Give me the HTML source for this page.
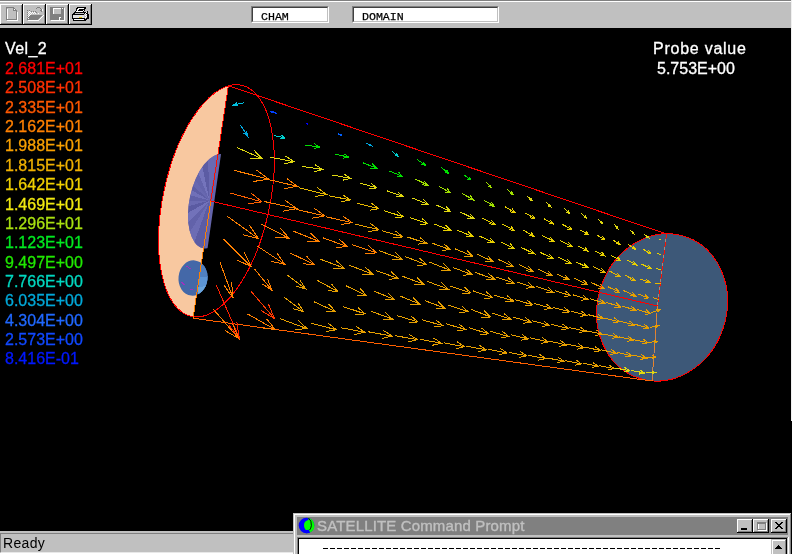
<!DOCTYPE html>
<html><head><meta charset="utf-8"><title>VR Viewer</title>
<style>
html,body{margin:0;padding:0;background:#000;}
body{width:792px;height:554px;position:relative;overflow:hidden;font-family:"Liberation Sans",sans-serif;}
.abs{position:absolute;}
.lg,.inp span,.abs{-webkit-font-smoothing:antialiased;}
.lg,#ttl,#rdy,.inp span{will-change:transform;}
#tb{left:0;top:0;width:792px;height:28px;background:#c0c0c0;}
#tb .l0{left:0;top:0;width:792px;height:1px;background:#808080;}
#tb .l1{left:0;top:1px;width:792px;height:1px;background:#fff;}
.btn{position:absolute;top:4px;width:22px;height:21px;background:#c0c0c0;box-sizing:border-box;
 border-top:1px solid #fff;border-left:1px solid #fff;border-right:1px solid #404040;border-bottom:1px solid #404040;}
.btn:after{content:"";position:absolute;left:0;top:0;right:0;bottom:0;border-right:1px solid #808080;border-bottom:1px solid #808080;}
.inp{position:absolute;top:6px;height:17px;background:#fff;box-sizing:border-box;border-top:1px solid #808080;border-left:1px solid #808080;border-right:1px solid #fff;border-bottom:1px solid #fff;}
.inp:after{content:"";position:absolute;left:0;top:0;right:0;bottom:0;border-top:1px solid #404040;border-left:1px solid #404040;border-right:1px solid #c0c0c0;border-bottom:1px solid #c0c0c0;}
.inp span{position:absolute;left:9.3px;top:3.2px;font-family:"Liberation Mono",monospace;font-size:11.6px;line-height:13px;color:#000;-webkit-text-stroke:0.25px #000;}
.lg{position:absolute;left:4.5px;font-size:16px;line-height:18px;white-space:nowrap;-webkit-text-stroke:0.3px currentColor;}
.w{color:#fff;}
#sb{left:0;top:531px;width:294px;height:23px;background:#c0c0c0;}
#sat{left:293px;top:513px;width:498px;height:41px;background:#c0c0c0;}
</style></head><body>
<div class="abs" style="left:791px;top:0;width:1px;height:421px;background:#f0f0f0;z-index:5"></div>
<div id="tb" class="abs"><div class="abs l0"></div><div class="abs l1"></div>
<svg class="abs" style="left:0;top:0" width="94" height="28" viewBox="0 0 94 28" shape-rendering="crispEdges" fill="none" stroke-width="1">
<g id="bt">
<rect x="0" y="4" width="22" height="21" fill="#c0c0c0"/>
<path d="M0.5 24V4.5H22" stroke="#fff"/>
<path d="M1 23.5H21.5V5" stroke="#808080"/>
<path d="M0 24.5H22.5V4" stroke="#000"/>
</g>
<use href="#bt" x="23"/><use href="#bt" x="46"/><use href="#bt" x="69"/>
<!-- new -->
<path d="M7.5 8.5V20.5H17.5V11.5" stroke="#fff"/>
<path d="M6.5 7.5H13.5L16.5 10.5V19.5H6.5Z M13.5 7.5V10.5H16.5" stroke="#808080"/>
<rect x="14" y="9" width="1" height="1" fill="#fff"/>
<!-- open -->
<path d="M28 20.5H38.5L43.5 15.5" stroke="#fff"/>
<polygon points="30.5,15 42.5,15 37.5,20 27,20 27,18" fill="#808080"/>
<path d="M27.5 19V10.5H30.5L31.5 11.5H36.5V14" stroke="#808080" stroke-dasharray="1 1"/>
<g fill="#fff"><rect x="28" y="12" width="1" height="1"/><rect x="29" y="13" width="1" height="1"/><rect x="28" y="14" width="1" height="1"/><rect x="29" y="11" width="1" height="1"/><rect x="30" y="12" width="1" height="1"/><rect x="31" y="13" width="1" height="1"/><rect x="28" y="16" width="1" height="1"/><rect x="29" y="15" width="1" height="1"/><rect x="30" y="14" width="1" height="1"/><rect x="28" y="18" width="1" height="1"/><rect x="32" y="12" width="1" height="1"/><rect x="34" y="12" width="1" height="1"/><rect x="33" y="13" width="1" height="1"/><rect x="35" y="13" width="1" height="1"/></g>
<path d="M35.5 9.5L37.5 7.5H39.5L41.5 9.5V11.5M39.5 10.5H42.5" stroke="#808080"/>
<path d="M38.5 12.5V13.5M42.5 9V11" stroke="#fff"/>
<!-- save -->
<path d="M51 20.5H64.5V8" stroke="#fff"/>
<rect x="50" y="7" width="14" height="13" fill="#808080"/>
<rect x="53" y="8" width="8" height="6" fill="#fff"/>
<rect x="54" y="9" width="7" height="5" fill="#c0c0c0"/>
<rect x="59" y="17" width="2" height="3" fill="#fff"/><rect x="60" y="18" width="1" height="2" fill="#808080"/>
<rect x="62" y="8" width="1" height="1" fill="#fff"/>
<!-- print -->
<polygon points="77.5,7.5 85.5,7.5 83.5,12 75.5,12" fill="#fff" stroke="#000"/>
<path d="M78.5 9.5H83.5M77.5 10.5H82.5" stroke="#000"/>
<polygon points="75,12.5 86,12.5 88,14.5 88,18.5 85,20.5 74,20.5 72.5,18.5 72.5,15" fill="#c0c0c0" stroke="#000"/>
<rect x="73" y="15" width="11" height="3" fill="#e0e0e0"/>
<path d="M72.5 14.5H84M72.5 18.5H84.5M74 20.5H84" stroke="#000"/>
<path d="M74 19.5H84" stroke="#fff"/>
<path d="M84.5 14L87.5 11.5V17.5L84.5 20" stroke="#000"/>
<g fill="#fff"><rect x="85" y="13" width="1" height="1"/><rect x="86" y="14" width="1" height="1"/><rect x="85" y="15" width="1" height="1"/><rect x="86" y="16" width="1" height="1"/><rect x="85" y="17" width="1" height="1"/><rect x="86" y="12" width="1" height="1"/></g>
<rect x="79" y="17" width="3" height="1" fill="#e0c000"/>
</svg>
<div class="inp" style="left:251px;width:78px"><span>CHAM</span></div>
<div class="inp" style="left:352px;width:147px"><span>DOMAIN</span></div>
</div>

<svg class="abs" style="left:0;top:28px" width="792" height="503" viewBox="0 28 792 503" shape-rendering="crispEdges" fill="none" stroke-width="1">
<defs>
<clipPath id="lefthalf"><polygon points="228.4,85.7 193,318.2 100,330 100,60"/></clipPath>
<clipPath id="inl"><ellipse cx="216.4" cy="200.8" rx="53.3" ry="118.3" transform="rotate(12.23 216.4 200.8)"/></clipPath>
<clipPath id="violethalf"><polygon points="221.6,150 206.6,255 150,255 150,150"/></clipPath>
<clipPath id="violetclip"><ellipse cx="213.1" cy="201.2" rx="23.5" ry="48" transform="rotate(12.23 213.1 201.2)"/></clipPath>
<clipPath id="smallc"><ellipse cx="193" cy="278" rx="14.5" ry="17.7" transform="rotate(6 193 278)"/></clipPath>
</defs>
<!-- inlet disc left half -->
<g clip-path="url(#lefthalf)">
<ellipse cx="216.4" cy="200.8" rx="53.3" ry="118.3" transform="rotate(12.23 216.4 200.8)" fill="#f8c8a0"/>
</g>
<g clip-path="url(#violetclip)">
<g clip-path="url(#violethalf)">
<rect x="180" y="150" width="50" height="105" fill="#6464aa"/>
<polygon points="209.5,200.5 203.4,270.2 185.6,266.3" fill="#5c5ca4"/>
<polygon points="209.5,200.5 185.6,266.3 172.4,259.9" fill="#6c6cb4"/>
<polygon points="209.5,200.5 172.4,259.9 160.0,250.0" fill="#6262aa"/>
<polygon points="209.5,200.5 160.0,250.0 148.9,235.5" fill="#7272ba"/>
<polygon points="209.5,200.5 148.9,235.5 141.9,218.6" fill="#5a5aa2"/>
<polygon points="209.5,200.5 141.9,218.6 139.5,200.5" fill="#6a6ab2"/>
<polygon points="209.5,200.5 139.5,200.5 141.9,182.4" fill="#6060a8"/>
<polygon points="209.5,200.5 141.9,182.4 148.9,165.5" fill="#7070b8"/>
<polygon points="209.5,200.5 148.9,165.5 157.5,153.7" fill="#5e5ea6"/>
<polygon points="209.5,200.5 157.5,153.7 169.3,143.2" fill="#6868b0"/>
<polygon points="209.5,200.5 169.3,143.2 183.3,135.6" fill="#6464ac"/>
<polygon points="209.5,200.5 183.3,135.6 194.9,132.0" fill="#7474bc"/>
<polygon points="209.5,200.5 194.9,132.0 207.1,130.5" fill="#5c5ca4"/>
<polygon points="209.5,200.5 207.1,130.5 221.7,131.6" fill="#6a6ab2"/>
</g></g>
<g clip-path="url(#smallc)">
<rect x="175" y="255" width="40" height="45" fill="#4468a8"/>
<polygon points="202.5,255 197.3,300 215,300 215,255" fill="#5080c0"/>
<polygon points="199.5,277 198.5,288 215,286 215,276" fill="#5c94d4"/>
<polygon points="198.5,287 197.5,300 215,300 215,285" fill="#6aa4dc"/>
<path d="M181 282l4 3M186 266l5 3M190 289l3 1" stroke="#a030c0"/>
</g>
<!-- outlet -->
<ellipse cx="662.1" cy="307.4" rx="64.5" ry="74.5" transform="rotate(17.35 662.1 307.4)" fill="#3d5878" stroke="#ff0000"/>
<!-- inlet outline -->
<ellipse cx="216.4" cy="200.8" rx="53.3" ry="118.3" transform="rotate(12.23 216.4 200.8)" stroke="#ff0000"/>
<!-- edges -->
<line x1="228.4" y1="85.7" x2="666.5" y2="234" stroke="#ff0000"/>
<line x1="193" y1="318.2" x2="652" y2="381" stroke="#ff6000"/>
<line x1="210.5" y1="201" x2="657.5" y2="306" stroke="#ff0000"/>
<line x1="228.4" y1="85.7" x2="210.7" y2="201.5" stroke="#ff1000"/><line x1="210.7" y1="201.5" x2="193" y2="318.2" stroke="#ff8000"/>
<line x1="666.5" y1="234" x2="657.5" y2="306" stroke="#a08a80"/><line x1="666.5" y1="234" x2="657.5" y2="306" stroke="#ff1000" stroke-dasharray="5 3"/><line x1="657.5" y1="306" x2="652" y2="381" stroke="#c08858"/><line x1="657.5" y1="306" x2="652" y2="381" stroke="#f08020" stroke-dasharray="4 4"/>
<g>
<path d="M243.9 102.7L233.3 105.2M238.0 105.7L233.3 105.2L237.2 102.6" stroke="#00c0e0"/>
<path d="M240.5 125.1L247.9 136.5M246.5 130.9L247.9 136.5L243.4 132.9" stroke="#00a8e0"/>
<path d="M237.2 147.7L262.0 158.6M253.9 150.1L262.0 158.6L250.3 158.4" stroke="#e0d810"/>
<path d="M233.8 170.3L268.7 179.1M256.3 169.8L268.7 179.1L253.4 181.5" stroke="#ff8000"/>
<path d="M230.3 193.1L262.2 201.9M251.1 193.1L262.2 201.9L248.1 203.8" stroke="#ff6000"/>
<path d="M226.9 216.0L258.2 238.5M249.5 225.1L258.2 238.5L242.7 234.6" stroke="#ff8000"/>
<path d="M223.4 239.1L251.1 266.6M244.2 252.2L251.1 266.6L236.7 259.8" stroke="#ff8000"/>
<path d="M220.0 262.2L233.1 298.3M231.5 282.4L233.1 298.3L224.0 285.1" stroke="#ff8000"/>
<path d="M216.5 285.5L239.3 338.1M236.9 322.3L239.3 338.1L229.3 325.6" stroke="#ff2000"/>
<path d="M213.0 308.9L238.9 338.7M232.6 324.0L238.9 338.7L225.1 330.5" stroke="#ff8000"/>
<path d="M276.9 113.5L270.7 111.2M272.8 113.2L270.7 111.2L273.6 111.1" stroke="#0040ff"/>
<path d="M273.7 135.4L285.2 138.0M281.1 135.0L285.2 138.0L280.3 138.8" stroke="#00d0d0"/>
<path d="M270.5 157.3L293.9 161.7M285.4 156.0L293.9 161.7L283.9 163.9" stroke="#e0d810"/>
<path d="M267.3 179.3L297.4 186.3M286.7 178.5L297.4 186.3L284.3 188.6" stroke="#ff8000"/>
<path d="M264.1 201.5L296.8 208.6M285.0 200.3L296.8 208.6L282.6 211.3" stroke="#ff8000"/>
<path d="M260.8 223.8L289.1 238.3M280.2 227.9L289.1 238.3L275.5 237.1" stroke="#ff8000"/>
<path d="M257.6 246.2L284.9 264.4M276.8 252.8L284.9 264.4L271.1 261.3" stroke="#ff8000"/>
<path d="M254.3 268.7L271.9 290.2M267.6 279.0L271.9 290.2L261.8 283.7" stroke="#ff8000"/>
<path d="M251.0 291.3L274.4 318.5M268.5 304.2L274.4 318.5L261.1 310.5" stroke="#ff3800"/>
<path d="M247.6 314.0L275.3 329.6M266.7 319.0L275.3 329.6L261.8 327.8" stroke="#ff8000"/>
<path d="M308.1 123.8L306.6 123.8M307.7 124.2L306.6 123.8L307.7 123.3" stroke="#0000ff"/>
<path d="M305.1 145.0L319.8 147.1M314.3 143.8L319.8 147.1L313.6 148.7" stroke="#00e000"/>
<path d="M302.1 166.4L322.8 169.5M315.1 164.8L322.8 169.5L314.0 171.7" stroke="#e0d810"/>
<path d="M299.0 187.8L326.8 194.6M316.9 187.3L326.8 194.6L314.7 196.6" stroke="#e8b800"/>
<path d="M295.9 209.4L324.8 215.9M314.5 208.4L324.8 215.9L312.3 218.2" stroke="#ff8000"/>
<path d="M292.9 231.0L319.4 241.6M310.6 233.0L319.4 241.6L307.1 241.8" stroke="#ff8000"/>
<path d="M289.8 252.8L314.1 264.5M306.3 255.9L314.1 264.5L302.5 263.8" stroke="#ff8000"/>
<path d="M286.7 274.7L305.6 288.9M300.1 280.3L305.6 288.9L295.8 286.1" stroke="#e8a000"/>
<path d="M283.5 296.7L303.6 311.7M297.8 302.6L303.6 311.7L293.3 308.7" stroke="#e8a000"/>
<path d="M280.4 318.8L307.3 328.8M298.2 320.4L307.3 328.8L294.9 329.3" stroke="#e8a000"/>
<path d="M337.6 133.5L342.1 135.8M340.7 134.1L342.1 135.8L340.0 135.6" stroke="#0060ff"/>
<path d="M334.8 154.2L348.8 157.1M343.7 153.6L348.8 157.1L342.7 158.2" stroke="#00e000"/>
<path d="M331.9 174.9L350.8 178.4M343.9 173.9L350.8 178.4L342.7 180.2" stroke="#e0d810"/>
<path d="M329.0 195.8L350.4 199.9M342.6 194.7L350.4 199.9L341.2 201.9" stroke="#e8b800"/>
<path d="M326.1 216.8L352.0 222.6M342.7 216.0L352.0 222.6L340.7 224.7" stroke="#ff8000"/>
<path d="M323.2 237.9L347.6 246.7M339.3 239.2L347.6 246.7L336.4 247.3" stroke="#ff8000"/>
<path d="M320.2 259.1L344.2 268.2M336.2 260.6L344.2 268.2L333.2 268.6" stroke="#e8a000"/>
<path d="M317.3 280.4L337.8 291.6M331.4 283.9L337.8 291.6L327.8 290.5" stroke="#e8a000"/>
<path d="M314.3 301.9L335.7 311.6M328.8 304.2L335.7 311.6L325.6 311.2" stroke="#e8a000"/>
<path d="M311.3 323.4L336.7 329.8M327.7 323.0L336.7 329.8L325.6 331.5" stroke="#e8a000"/>
<path d="M365.6 142.6L371.4 145.9M369.6 143.7L371.4 145.9L368.5 145.6" stroke="#00a8e0"/>
<path d="M362.9 162.8L376.9 168.3M372.2 163.8L376.9 168.3L370.4 168.5" stroke="#00e000"/>
<path d="M360.1 183.1L376.7 187.9M371.0 183.2L376.7 187.9L369.3 188.8" stroke="#e0d810"/>
<path d="M357.4 203.4L378.9 208.7M371.3 203.0L378.9 208.7L369.5 210.3" stroke="#e8b800"/>
<path d="M354.6 223.9L379.0 229.8M370.3 223.4L379.0 229.8L368.4 231.6" stroke="#e8a000"/>
<path d="M351.8 244.5L376.6 252.9M368.2 245.4L376.6 252.9L365.4 253.7" stroke="#ff8000"/>
<path d="M349.0 265.1L372.8 274.3M364.9 266.7L372.8 274.3L361.9 274.6" stroke="#e8a000"/>
<path d="M346.2 285.9L366.6 295.6M360.1 288.4L366.6 295.6L356.9 295.0" stroke="#e8a000"/>
<path d="M343.4 306.7L365.3 313.9M357.8 307.4L365.3 313.9L355.4 314.7" stroke="#e8a000"/>
<path d="M340.6 327.7L364.9 332.2M356.0 326.3L364.9 332.2L354.5 334.5" stroke="#e8a000"/>
<path d="M392.1 151.4L397.9 156.3M396.4 153.4L397.9 156.3L394.8 155.2" stroke="#00d0d0"/>
<path d="M389.5 171.0L402.7 176.4M398.4 172.1L402.7 176.4L396.6 176.5" stroke="#00e000"/>
<path d="M386.9 190.8L403.1 196.6M397.7 191.6L403.1 196.6L395.7 197.0" stroke="#e0d810"/>
<path d="M384.3 210.7L403.4 216.9M396.9 211.2L403.4 216.9L394.8 217.6" stroke="#e8d000"/>
<path d="M381.7 230.6L402.8 236.9M395.5 230.9L402.8 236.9L393.4 238.0" stroke="#e8a000"/>
<path d="M379.0 250.6L402.4 259.2M394.6 251.9L402.4 259.2L391.7 259.7" stroke="#e8a000"/>
<path d="M376.4 270.8L398.8 278.6M391.2 271.8L398.8 278.6L388.6 279.2" stroke="#e8a000"/>
<path d="M373.7 291.0L394.2 299.4M387.5 292.7L394.2 299.4L384.7 299.5" stroke="#e8a000"/>
<path d="M371.0 311.3L392.5 319.1M385.3 312.5L392.5 319.1L382.7 319.6" stroke="#e8a000"/>
<path d="M368.3 331.8L392.1 336.1M383.4 330.4L392.1 336.1L382.0 338.4" stroke="#e8a000"/>
<path d="M417.3 159.6L425.5 165.4M423.2 161.8L425.5 165.4L421.3 164.5" stroke="#00e000"/>
<path d="M414.9 178.8L428.0 185.2M423.8 180.5L428.0 185.2L421.7 184.9" stroke="#a0e000"/>
<path d="M412.4 198.1L428.4 204.5M423.1 199.3L428.4 204.5L421.0 204.7" stroke="#e0d810"/>
<path d="M409.9 217.5L428.0 223.9M421.9 218.3L428.0 223.9L419.7 224.4" stroke="#e8d000"/>
<path d="M407.4 237.0L426.9 243.4M420.2 237.6L426.9 243.4L418.1 244.1" stroke="#e8a000"/>
<path d="M404.9 256.5L426.8 264.9M419.5 257.9L426.8 264.9L416.7 265.2" stroke="#e8a000"/>
<path d="M402.3 276.2L424.1 284.3M416.8 277.4L424.1 284.3L414.1 284.7" stroke="#e8a000"/>
<path d="M399.8 295.9L419.7 304.1M413.1 297.6L419.7 304.1L410.4 304.1" stroke="#e8a000"/>
<path d="M397.2 315.7L418.1 321.9M410.9 316.0L418.1 321.9L408.8 322.9" stroke="#e8a000"/>
<path d="M394.7 335.6L417.5 339.7M409.1 334.3L417.5 339.7L407.8 341.9" stroke="#e8a000"/>
<path d="M441.3 167.5L448.5 173.3M446.6 169.9L448.5 173.3L444.7 172.1" stroke="#00e000"/>
<path d="M439.0 186.3L450.7 192.9M447.1 188.3L450.7 192.9L444.9 192.2" stroke="#a0e000"/>
<path d="M436.6 205.1L450.7 211.5M446.2 206.6L450.7 211.5L444.0 211.3" stroke="#e0d810"/>
<path d="M434.2 224.0L451.3 230.6M445.6 225.1L451.3 230.6L443.4 230.8" stroke="#e8d000"/>
<path d="M431.8 243.0L450.4 249.8M444.2 244.0L450.4 249.8L441.9 250.2" stroke="#e8a000"/>
<path d="M429.4 262.1L450.3 270.3M443.4 263.6L450.3 270.3L440.7 270.5" stroke="#e8a000"/>
<path d="M427.0 281.3L448.4 289.1M441.2 282.4L448.4 289.1L438.6 289.5" stroke="#e8a000"/>
<path d="M424.6 300.5L445.1 308.3M438.2 301.8L445.1 308.3L435.7 308.6" stroke="#e8a000"/>
<path d="M422.2 319.9L443.2 325.7M435.8 319.9L443.2 325.7L433.9 326.9" stroke="#e8a000"/>
<path d="M419.7 339.3L441.6 343.2M433.6 338.0L441.6 343.2L432.3 345.3" stroke="#e8a000"/>
<path d="M464.2 175.0L470.8 179.8M468.9 176.9L470.8 179.8L467.4 179.0" stroke="#00e000"/>
<path d="M461.9 193.3L473.8 200.1M470.2 195.5L473.8 200.1L468.0 199.4" stroke="#a0e000"/>
<path d="M459.7 211.7L474.5 218.9M469.8 213.6L474.5 218.9L467.4 218.5" stroke="#e0d810"/>
<path d="M457.4 230.2L473.5 236.9M468.2 231.6L473.5 236.9L466.0 236.9" stroke="#e8d000"/>
<path d="M455.1 248.8L472.5 256.2M466.8 250.4L472.5 256.2L464.4 256.1" stroke="#e8a000"/>
<path d="M452.8 267.4L472.3 274.8M465.8 268.6L472.3 274.8L463.4 275.1" stroke="#e8a000"/>
<path d="M450.5 286.1L470.9 292.9M464.0 286.8L470.9 292.9L461.7 293.7" stroke="#e8a000"/>
<path d="M448.2 305.0L468.3 311.8M461.5 305.7L468.3 311.8L459.2 312.4" stroke="#e8a000"/>
<path d="M445.9 323.8L466.0 329.6M459.0 324.0L466.0 329.6L457.0 330.7" stroke="#e8a000"/>
<path d="M443.5 342.8L464.6 346.7M456.9 341.6L464.6 346.7L455.6 348.7" stroke="#e8a000"/>
<path d="M486.0 182.2L491.2 187.4M489.9 184.5L491.2 187.4L488.3 186.1" stroke="#a0e000"/>
<path d="M483.8 200.1L494.3 206.3M491.2 202.1L494.3 206.3L489.1 205.5" stroke="#a0e000"/>
<path d="M481.7 218.1L494.8 224.2M490.6 219.6L494.8 224.2L488.5 223.9" stroke="#e8d000"/>
<path d="M479.5 236.1L494.7 242.9M489.8 237.7L494.7 242.9L487.5 242.8" stroke="#e8d000"/>
<path d="M477.3 254.3L492.9 261.5M487.9 256.0L492.9 261.5L485.5 261.2" stroke="#e8a000"/>
<path d="M475.1 272.5L495.1 279.3M488.3 273.3L495.1 279.3L486.0 279.9" stroke="#e8a000"/>
<path d="M472.9 290.8L493.0 297.8M486.2 291.7L493.0 297.8L483.9 298.4" stroke="#e8a000"/>
<path d="M470.7 309.2L490.7 317.0M484.0 310.6L490.7 317.0L481.5 317.2" stroke="#e8a000"/>
<path d="M468.5 327.6L488.6 333.8M481.6 328.0L488.6 333.8L479.6 334.7" stroke="#e8a000"/>
<path d="M466.2 346.1L486.4 349.9M479.0 345.0L486.4 349.9L477.8 351.8" stroke="#e8a000"/>
<path d="M506.8 189.0L513.2 194.8M511.5 191.5L513.2 194.8L509.7 193.5" stroke="#a0e000"/>
<path d="M504.7 206.5L515.0 212.6M511.9 208.5L515.0 212.6L509.9 211.9" stroke="#e8d000"/>
<path d="M502.6 224.1L514.3 230.3M510.7 225.9L514.3 230.3L508.7 229.8" stroke="#e8d000"/>
<path d="M500.6 241.8L514.7 248.8M510.2 243.7L514.7 248.8L507.9 248.3" stroke="#e8d000"/>
<path d="M498.5 259.5L513.2 266.4M508.5 261.3L513.2 266.4L506.2 266.1" stroke="#e8a000"/>
<path d="M496.4 277.3L514.3 283.1M508.2 277.8L514.3 283.1L506.2 283.8" stroke="#e8a000"/>
<path d="M494.3 295.2L513.8 301.0M507.0 295.5L513.8 301.0L505.1 302.0" stroke="#e8a000"/>
<path d="M492.2 313.2L510.7 319.1M504.3 313.7L510.7 319.1L502.3 319.8" stroke="#e8a000"/>
<path d="M490.0 331.2L509.0 336.6M502.4 331.3L509.0 336.6L500.6 337.6" stroke="#e8a000"/>
<path d="M487.9 349.3L507.1 352.9M500.1 348.3L507.1 352.9L498.9 354.7" stroke="#e8a000"/>
<path d="M526.7 195.5L532.6 201.0M531.0 197.9L532.6 201.0L529.4 199.7" stroke="#e0d810"/>
<path d="M524.7 212.7L534.8 218.5M531.7 214.5L534.8 218.5L529.8 217.8" stroke="#e8d000"/>
<path d="M522.7 229.9L534.2 236.2M530.7 231.8L534.2 236.2L528.6 235.6" stroke="#e8d000"/>
<path d="M520.7 247.2L534.8 254.0M530.3 249.0L534.8 254.0L528.1 253.6" stroke="#e8d000"/>
<path d="M518.7 264.5L532.7 271.3M528.3 266.3L532.7 271.3L526.0 270.9" stroke="#e8a000"/>
<path d="M516.7 282.0L534.0 287.5M528.1 282.4L534.0 287.5L526.2 288.2" stroke="#e8a000"/>
<path d="M514.7 299.5L532.9 304.9M526.6 299.7L532.9 304.9L524.8 305.8" stroke="#e8a000"/>
<path d="M512.6 317.0L531.3 322.3M524.8 317.1L531.3 322.3L523.1 323.3" stroke="#e8a000"/>
<path d="M510.6 334.6L528.2 338.9M522.0 334.3L528.2 338.9L520.5 340.2" stroke="#e8a000"/>
<path d="M508.6 352.4L526.9 355.8M520.2 351.4L526.9 355.8L519.1 357.5" stroke="#e8a000"/>
<path d="M545.7 201.8L551.2 207.2M549.8 204.2L551.2 207.2L548.2 205.9" stroke="#e0d810"/>
<path d="M543.8 218.6L553.5 224.1M550.5 220.3L553.5 224.1L548.7 223.5" stroke="#e8d000"/>
<path d="M541.9 235.4L554.1 241.2M550.2 236.9L554.1 241.2L548.3 241.0" stroke="#e8d000"/>
<path d="M540.0 252.3L553.7 258.8M549.3 254.0L553.7 258.8L547.2 258.5" stroke="#e8d000"/>
<path d="M538.1 269.3L552.7 275.9M548.0 270.9L552.7 275.9L545.8 275.7" stroke="#e8a000"/>
<path d="M536.1 286.4L553.6 292.3M547.7 287.0L553.6 292.3L545.7 292.9" stroke="#e8a000"/>
<path d="M534.2 303.5L551.8 308.4M545.6 303.5L551.8 308.4L544.0 309.4" stroke="#e8a000"/>
<path d="M532.2 320.7L549.3 325.4M543.4 320.7L549.3 325.4L541.8 326.4" stroke="#e8a000"/>
<path d="M530.3 337.9L548.4 342.0M541.9 337.4L548.4 342.0L540.5 343.4" stroke="#e8a000"/>
<path d="M528.3 355.3L545.9 358.6M539.5 354.3L545.9 358.6L538.4 360.2" stroke="#e8a000"/>
<path d="M563.9 207.8L569.5 213.7M568.1 210.5L569.5 213.7L566.4 212.1" stroke="#e0d810"/>
<path d="M562.1 224.2L571.9 229.6M568.9 225.9L571.9 229.6L567.1 229.1" stroke="#e8d000"/>
<path d="M560.3 240.7L572.4 246.6M568.5 242.3L572.4 246.6L566.6 246.3" stroke="#e8d000"/>
<path d="M558.4 257.3L571.1 263.4M567.1 258.9L571.1 263.4L565.1 263.1" stroke="#e8d000"/>
<path d="M556.6 273.9L569.3 279.8M565.2 275.4L569.3 279.8L563.3 279.6" stroke="#e8a000"/>
<path d="M554.7 290.6L570.9 295.7M565.4 291.0L570.9 295.7L563.7 296.4" stroke="#e8a000"/>
<path d="M552.9 307.4L570.1 311.9M564.0 307.2L570.1 311.9L562.5 313.0" stroke="#e8a000"/>
<path d="M551.0 324.2L568.5 328.6M562.3 323.9L568.5 328.6L560.8 329.8" stroke="#e8a000"/>
<path d="M549.1 341.1L566.7 345.0M560.4 340.5L566.7 345.0L559.1 346.4" stroke="#e8a000"/>
<path d="M547.2 358.0L564.1 361.2M558.0 357.1L564.1 361.2L556.9 362.8" stroke="#e8a000"/>
<path d="M581.4 213.5L586.3 218.0M585.0 215.4L586.3 218.0L583.6 217.0" stroke="#e0d810"/>
<path d="M579.6 229.6L588.9 234.9M586.1 231.3L588.9 234.9L584.4 234.3" stroke="#e8d000"/>
<path d="M577.9 245.8L588.1 251.1M584.9 247.3L588.1 251.1L583.1 250.7" stroke="#e8d000"/>
<path d="M576.1 262.0L587.8 267.4M584.0 263.3L587.8 267.4L582.3 267.2" stroke="#e8d000"/>
<path d="M574.3 278.3L587.9 284.8M583.6 280.0L587.9 284.8L581.5 284.5" stroke="#e8a000"/>
<path d="M572.5 294.7L588.1 299.6M582.8 295.0L588.1 299.6L581.1 300.2" stroke="#e8a000"/>
<path d="M570.8 311.1L586.8 315.4M581.1 311.0L586.8 315.4L579.7 316.4" stroke="#e8a000"/>
<path d="M569.0 327.6L586.0 331.2M579.8 326.9L586.0 331.2L578.6 332.6" stroke="#e8a000"/>
<path d="M567.2 344.1L584.0 347.9M578.0 343.5L584.0 347.9L576.7 349.2" stroke="#e8a000"/>
<path d="M565.4 360.7L581.5 363.8M575.6 359.8L581.5 363.8L574.6 365.3" stroke="#e8a000"/>
<path d="M598.1 219.0L602.5 223.7M601.4 221.1L602.5 223.7L600.0 222.4" stroke="#e0d810"/>
<path d="M596.4 234.8L604.8 239.7M602.3 236.4L604.8 239.7L600.6 239.1" stroke="#e8d000"/>
<path d="M594.7 250.7L605.0 256.0M601.8 252.1L605.0 256.0L600.1 255.5" stroke="#e8d000"/>
<path d="M593.1 266.6L605.0 272.3M601.2 268.0L605.0 272.3L599.3 272.0" stroke="#e8b800"/>
<path d="M591.3 282.5L604.5 288.8M600.3 284.1L604.5 288.8L598.3 288.5" stroke="#e8a000"/>
<path d="M589.6 298.5L605.2 303.4M599.9 298.9L605.2 303.4L598.2 304.1" stroke="#e8a000"/>
<path d="M587.9 314.6L603.5 318.5M598.0 314.4L603.5 318.5L596.7 319.6" stroke="#e8a000"/>
<path d="M586.2 330.8L602.5 334.2M596.6 330.1L602.5 334.2L595.5 335.6" stroke="#e8a000"/>
<path d="M584.5 347.0L600.7 350.6M594.9 346.5L600.7 350.6L593.6 351.9" stroke="#e8a000"/>
<path d="M582.7 363.2L598.2 366.2M592.6 362.4L598.2 366.2L591.6 367.6" stroke="#e8a000"/>
<path d="M614.2 224.3L618.1 229.1M617.2 226.6L618.1 229.1L615.8 227.7" stroke="#e0d810"/>
<path d="M612.6 239.8L620.0 244.3M617.8 241.3L620.0 244.3L616.3 243.7" stroke="#e8d000"/>
<path d="M611.0 255.3L620.7 260.7M617.7 257.0L620.7 260.7L615.9 260.2" stroke="#e8d000"/>
<path d="M609.3 270.9L620.1 276.6M616.8 272.6L620.1 276.6L614.9 276.1" stroke="#e8b800"/>
<path d="M607.7 286.6L619.5 292.3M615.7 288.1L619.5 292.3L613.9 291.9" stroke="#e8a000"/>
<path d="M606.0 302.3L621.0 307.0M615.9 302.6L621.0 307.0L614.3 307.6" stroke="#e8a000"/>
<path d="M604.4 318.0L619.4 321.8M614.1 317.8L619.4 321.8L612.8 322.8" stroke="#e8a000"/>
<path d="M602.7 333.9L618.4 337.2M612.7 333.3L618.4 337.2L611.6 338.5" stroke="#e8a000"/>
<path d="M601.1 349.8L616.6 353.3M611.0 349.3L616.6 353.3L609.9 354.5" stroke="#e8a000"/>
<path d="M599.4 365.7L614.3 368.6M608.8 364.9L614.3 368.6L607.9 369.9" stroke="#e8a000"/>
<path d="M629.7 229.4L633.8 233.7M632.8 231.3L633.8 233.7L631.5 232.6" stroke="#e0d810"/>
<path d="M628.1 244.6L635.7 249.3M633.4 246.2L635.7 249.3L631.9 248.6" stroke="#e8d000"/>
<path d="M626.5 259.8L636.7 265.1M633.6 261.3L636.7 265.1L631.8 264.7" stroke="#e8d000"/>
<path d="M625.0 275.1L634.9 280.4M631.8 276.7L634.9 280.4L630.1 279.9" stroke="#e8b800"/>
<path d="M623.4 290.5L635.9 296.1M631.8 291.8L635.9 296.1L630.0 295.9" stroke="#e8a000"/>
<path d="M621.8 305.9L636.2 310.4M631.3 306.2L636.2 310.4L629.7 311.0" stroke="#e8a000"/>
<path d="M620.2 321.3L634.6 325.0M629.5 321.1L634.6 325.0L628.3 325.9" stroke="#e8a000"/>
<path d="M618.6 336.8L633.7 340.1M628.2 336.3L633.7 340.1L627.2 341.3" stroke="#e8a000"/>
<path d="M617.0 352.4L631.9 355.8M626.6 352.0L631.9 355.8L625.5 357.0" stroke="#e8a000"/>
<path d="M615.4 368.0L629.7 370.8M624.5 367.3L629.7 370.8L623.6 372.1" stroke="#e0d810"/>
<path d="M644.5 234.3L648.9 238.1M647.8 235.8L648.9 238.1L646.6 237.2" stroke="#e0d810"/>
<path d="M643.0 249.2L650.6 253.3M648.3 250.4L650.6 253.3L646.9 252.9" stroke="#e8d000"/>
<path d="M641.5 264.1L651.5 268.8M648.3 265.3L651.5 268.8L646.8 268.6" stroke="#e8d000"/>
<path d="M640.0 279.1L649.9 282.3M646.5 279.4L649.9 282.3L645.4 282.7" stroke="#e8b800"/>
<path d="M638.5 294.2L648.4 298.0M645.1 294.8L648.4 298.0L643.8 298.1" stroke="#e8a000"/>
<path d="M636.9 309.3L650.8 313.7M646.0 309.7L650.8 313.7L644.6 314.3" stroke="#e8a000"/>
<path d="M635.4 324.5L649.3 328.0M644.4 324.3L649.3 328.0L643.2 328.9" stroke="#e8a000"/>
<path d="M633.9 339.7L648.3 342.8M643.1 339.1L648.3 342.8L642.1 344.0" stroke="#e8a000"/>
<path d="M632.3 355.0L646.7 358.2M641.5 354.5L646.7 358.2L640.4 359.4" stroke="#e8a000"/>
<path d="M630.8 370.3L644.5 373.0M639.5 369.6L644.5 373.0L638.6 374.2" stroke="#e0d810"/>
<path d="M658.8 238.9l1.5 1.0" stroke="#e0d810"/>
<path d="M657.4 253.6l3.8 1.0" stroke="#e8d000"/>
<path d="M655.9 268.3l4.7 1.4" stroke="#e8d000"/>
<path d="M654.5 283.0l6.2 1.0" stroke="#e8b800"/>
<path d="M653.0 297.8l6.4 1.9" stroke="#e8a000"/>
<path d="M651.5 312.6L660.5 309.3M656.4 309.4L660.5 309.3L657.3 312.0" stroke="#e8a000"/>
<path d="M650.0 327.5L658.7 325.7M655.0 325.1L658.7 325.7L655.5 327.8" stroke="#e8a000"/>
<path d="M648.5 342.4L657.5 341.5M653.8 340.4L657.5 341.5L654.1 343.4" stroke="#e8a000"/>
<path d="M647.0 357.4L656.0 357.1M652.4 355.8L656.0 357.1L652.5 358.7" stroke="#e8a000"/>
<path d="M645.6 372.5L655.5 372.5M651.5 370.8L655.5 372.5L651.5 374.1" stroke="#e0d810"/>
</g>
</svg>

<div class="lg w" style="top:40px;letter-spacing:0.4px">Vel_2</div>
<div class="lg" style="top:60.0px;color:#ff0000">2.681E+01</div><div class="lg" style="top:79.4px;color:#ff3000">2.508E+01</div><div class="lg" style="top:98.7px;color:#ff5800">2.335E+01</div><div class="lg" style="top:118.1px;color:#ff8000">2.162E+01</div><div class="lg" style="top:137.4px;color:#f8a000">1.988E+01</div><div class="lg" style="top:156.8px;color:#f0b000">1.815E+01</div><div class="lg" style="top:176.2px;color:#f0d000">1.642E+01</div><div class="lg" style="top:195.5px;color:#f0e810">1.469E+01</div><div class="lg" style="top:214.9px;color:#a8e010">1.296E+01</div><div class="lg" style="top:234.2px;color:#00e820">1.123E+01</div><div class="lg" style="top:253.6px;color:#20e800">9.497E+00</div><div class="lg" style="top:273.0px;color:#00d8c0">7.766E+00</div><div class="lg" style="top:292.3px;color:#00a8d8">6.035E+00</div><div class="lg" style="top:311.7px;color:#2068ff">4.304E+00</div><div class="lg" style="top:331.0px;color:#1048ff">2.573E+00</div><div class="lg" style="top:350.4px;color:#0018ff">8.416E-01</div>
<div class="lg w" style="left:653px;top:40px;letter-spacing:0.75px">Probe value</div>
<div class="lg w" style="left:657px;top:60px">5.753E+00</div>

<svg class="abs" style="left:0;top:504px" width="792" height="50" viewBox="0 504 792 50" shape-rendering="crispEdges" fill="none" stroke-width="1">
<!-- status bar -->
<rect x="0" y="531" width="293" height="23" fill="#c0c0c0"/>
<path d="M0 533.5H293M0.5 533V552" stroke="#808080"/>
<path d="M1 552.5H293" stroke="#e8e8e8"/><path d="M0 553.5H293" stroke="#fff"/>
<!-- satellite window -->
<rect x="293" y="513" width="499" height="41" fill="#c0c0c0"/>
<path d="M294.5 554V514.5H790" stroke="#fff"/>
<path d="M790.5 514V554" stroke="#808080"/><path d="M791.5 513V554" stroke="#000"/>
<rect x="297" y="517" width="491" height="18" fill="#808080"/>
<!-- client -->
<rect x="299" y="539" width="489" height="15" fill="#fff"/>
<path d="M297.5 554V537.5H788" stroke="#808080"/><path d="M298.5 554V538.5H787" stroke="#000"/>
<path d="M788.5 537V554" stroke="#fff"/><path d="M787.5 538V554" stroke="#c0c0c0"/>
<!-- scrollbar -->
<rect x="771" y="539" width="16" height="15" fill="#e0e0e0"/>
<rect x="771" y="539" width="16" height="15" fill="#c0c0c0"/>
<path d="M771.5 554V539.5H786" stroke="#c0c0c0"/><path d="M772.5 554V540.5H785" stroke="#fff"/>
<path d="M786.5 539V554" stroke="#000"/><path d="M785.5 540V554" stroke="#808080"/>
<polygon points="775,549 782,549 778.5,545" fill="#000"/>
<!-- dashes -->
<path d="M323 548.5H720" stroke="#000" stroke-dasharray="5 2"/>
<!-- title buttons -->
<g id="wb"><rect x="737" y="519" width="16" height="14" fill="#c0c0c0"/>
<path d="M737.5 532V519.5H752" stroke="#fff"/><path d="M738 531.5H751.5V520" stroke="#808080"/><path d="M737 532.5H752.5V519" stroke="#000"/></g>
<use href="#wb" x="16"/><use href="#wb" x="34"/>
<rect x="741" y="528" width="6" height="2" fill="#000"/>
<path d="M757.5 522.5H765.5V529.5H757.5Z" stroke="#fff" transform="translate(1 1)"/>
<path d="M757.5 522.5H765.5V529.5H757.5Z M757 523.5H766" stroke="#808080"/>
<path d="M775 522L782 529M776 522L783 529M782 522L775 529M783 522L776 529" stroke="#000" shape-rendering="crispEdges"/>
<!-- icon -->
<g shape-rendering="auto">
<circle cx="306.5" cy="525.5" r="7.8" fill="#0000ff"/>
<path d="M308.4 517.9A7.8 7.8 0 0 1 309.4 532.8L309.4 530.9A5.4 5.5 0 0 1 308.4 520Z" fill="#00ff00"/>
<path d="M304.8 530.2L309 529.8L309.8 532.9L306 533.3Z" fill="#0000ff"/>
<path d="M308.5 518.2Q311.8 520.5 311.4 525.5Q311 528.5 309.6 530" stroke="#000" stroke-width="0.9" fill="none"/>
</g>
</svg>
<div class="abs" id="rdy" style="left:3px;top:534px;font-size:14px;letter-spacing:0.35px;line-height:18px;color:#000">Ready</div>
<div class="abs" id="ttl" style="left:317px;top:516px;font-size:15px;line-height:19px;color:#c0c0c0;-webkit-text-stroke:0.35px #c0c0c0;letter-spacing:0.15px;white-space:nowrap">SATELLITE Command Prompt</div>
</body></html>
